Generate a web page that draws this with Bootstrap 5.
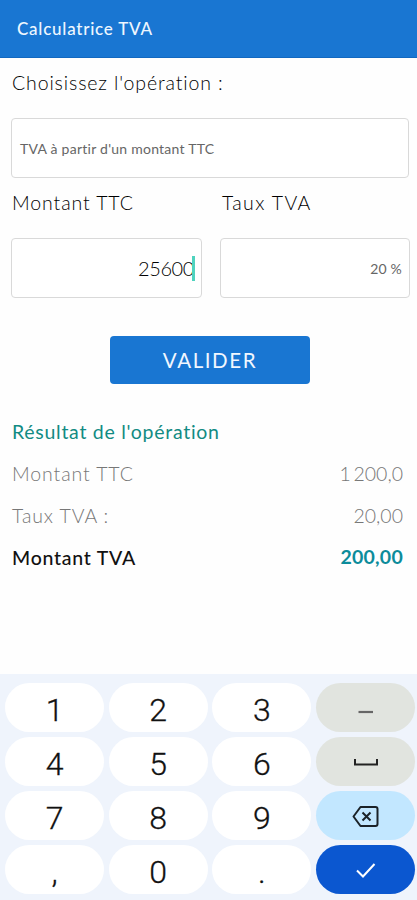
<!DOCTYPE html>
<html lang="fr">
<head>
<meta charset="utf-8">
<meta name="viewport" content="width=device-width, initial-scale=1">
<title>Calculatrice TVA</title>
<link href="https://cdn.jsdelivr.net/npm/bootstrap@5.3.0/dist/css/bootstrap.min.css" rel="stylesheet">
<style>
  body { font-family: Lato, "Open Sans", sans-serif; background: #fefefe; color: #2b2b2b; height: 900px; overflow: hidden; }
  .app-bar { height: 58px; background: #1976d2; padding-left: 17px; border-bottom: 1px solid #1268c0; }
  .app-title { font-size: 17px; font-weight: 500; letter-spacing: .76px; color: #eef6ff; }
  .content { height: 616px; padding: 13px 7px 0 12px; }
  .t { font-size: 19.5px; line-height: 24px; letter-spacing: .75px; white-space: nowrap; }
  .plain { font-weight: 300; color: #000; letter-spacing: .9px; }
  .op-label { letter-spacing: .87px; }
  .tax-label { letter-spacing: 1.35px; padding-left: 1px; }
  .field { height: 60px; border: 1.5px solid #d9d9d9; border-radius: 4px; background: #fff; margin-left: -1px; }
  .op-field { margin: 23px 1px 0 -1px; padding-left: 8px; font-size: 14px; font-weight: 400; letter-spacing: .25px; color: #666; }
  .labels { margin-top: 13px; }
  .two { display: grid; grid-template-columns: 190px 189px; column-gap: 19px; }
  .amounts { margin-top: 23px; }
  .amount { font-size: 20px; padding-right: 6px; font-weight: 300; color: #000; letter-spacing: -.4px; }
  .caret { width: 3px; height: 25px; background: #4fd3be; margin-left: -2px; }
  .rate { font-size: 14px; padding-right: 7px; color: #666; letter-spacing: .2px; }
  .validate { width: 200px; height: 48px; margin: 38px 0 0 98px; background: #1976d2; border-radius: 4px; color: #f1f7ff; font-size: 20.5px; letter-spacing: 1.6px; padding: 0; line-height: 48px; border: 0; }
  .result-title { color: #128b83; margin-top: 36px; letter-spacing: .72px; }
  .line { height: 24px; padding-right: 7px; margin-top: 18px; }
  .soft { color: #777; font-weight: 300; letter-spacing: .9px; }
  .val { letter-spacing: 0; word-spacing: -2.5px; }
  .total { color: #111; font-weight: 500; }
  .total .val { color: #0c8c9b; font-weight: 700; margin-top: -1px; letter-spacing: .25px; }
  .keypad { height: 226px; background: #eff4fc; display: grid; grid-template-columns: repeat(4, 99px); grid-auto-rows: 49px; column-gap: 4.7px; row-gap: 5px; padding: 9px 0 0 5px; }
  .key { border: 0; border-radius: 25px; background: #fff; color: #111; font-family: Roboto, sans-serif; font-weight: 300; font-size: 32px; line-height: 49px; padding: 3px 0 0; -webkit-text-stroke: .3px #111; }
  .key svg { display: block; margin-top: -2px; }
  .key-gray { background: #e1e4df; }
  .key-del { background: #c2e7ff; }
  .key-ok { background: #0b57d0; }
</style>
</head>
<body>
<header class="app-bar d-flex align-items-center"><span class="app-title">Calculatrice TVA</span></header>
<main class="content">
  <div class="t plain op-label">Choisissez l'opération :</div>
  <div class="field op-field d-flex align-items-center">TVA à partir d'un montant TTC</div>
  <div class="two labels"><span class="t plain">Montant TTC</span><span class="t plain tax-label">Taux TVA</span></div>
  <div class="two amounts">
    <div class="field amount d-flex align-items-center justify-content-end">25600<span class="caret"></span></div>
    <div class="field rate d-flex align-items-center justify-content-end">20 %</div>
  </div>
  <button class="validate btn d-block" type="button">VALIDER</button>
  <div class="t result-title">Résultat de l'opération</div>
  <div class="line soft t d-flex justify-content-between"><span>Montant TTC</span><span class="val">1 200,0</span></div>
  <div class="line soft t d-flex justify-content-between"><span>Taux TVA :</span><span class="val">20,00</span></div>
  <div class="line total t d-flex justify-content-between"><span>Montant TVA</span><span class="val">200,00</span></div>
</main>
<section class="keypad">
  <button class="key">1</button><button class="key">2</button><button class="key">3</button>
  <button class="key key-gray d-flex align-items-center justify-content-center" aria-label="Moins"><svg width="30" height="30" fill="none" stroke="#666" stroke-width="2.2"><path d="M7.500 19H22"/></svg></button>
  <button class="key">4</button><button class="key">5</button><button class="key">6</button>
  <button class="key key-gray d-flex align-items-center justify-content-center" aria-label="Espace"><svg width="30" height="30" fill="none" stroke="#222" stroke-width="2"><path d="M4 12V17.500H26V12"/></svg></button>
  <button class="key">7</button><button class="key">8</button><button class="key">9</button>
  <button class="key key-del d-flex align-items-center justify-content-center" aria-label="Effacer"><svg width="30" height="30" fill="none" stroke="#1a2228" stroke-width="2" stroke-linejoin="round"><path d="M9.500 6H24.500Q26.500 6 26.500 8V23Q26.500 25 24.500 25H9.500L2.500 15.500ZM11.500 11.500L19.500 19.500M19.500 11.500L11.500 19.500"/></svg></button>
  <button class="key">,</button><button class="key">0</button><button class="key">.</button>
  <button class="key key-ok d-flex align-items-center justify-content-center" aria-label="OK"><svg width="30" height="30" fill="none" stroke="#fff" stroke-width="2"><path d="M6 15.500L12 21.500L23.500 9"/></svg></button>
</section>
<script src="https://cdn.jsdelivr.net/npm/bootstrap@5.3.0/dist/js/bootstrap.bundle.min.js"></script>
</body>
</html>
